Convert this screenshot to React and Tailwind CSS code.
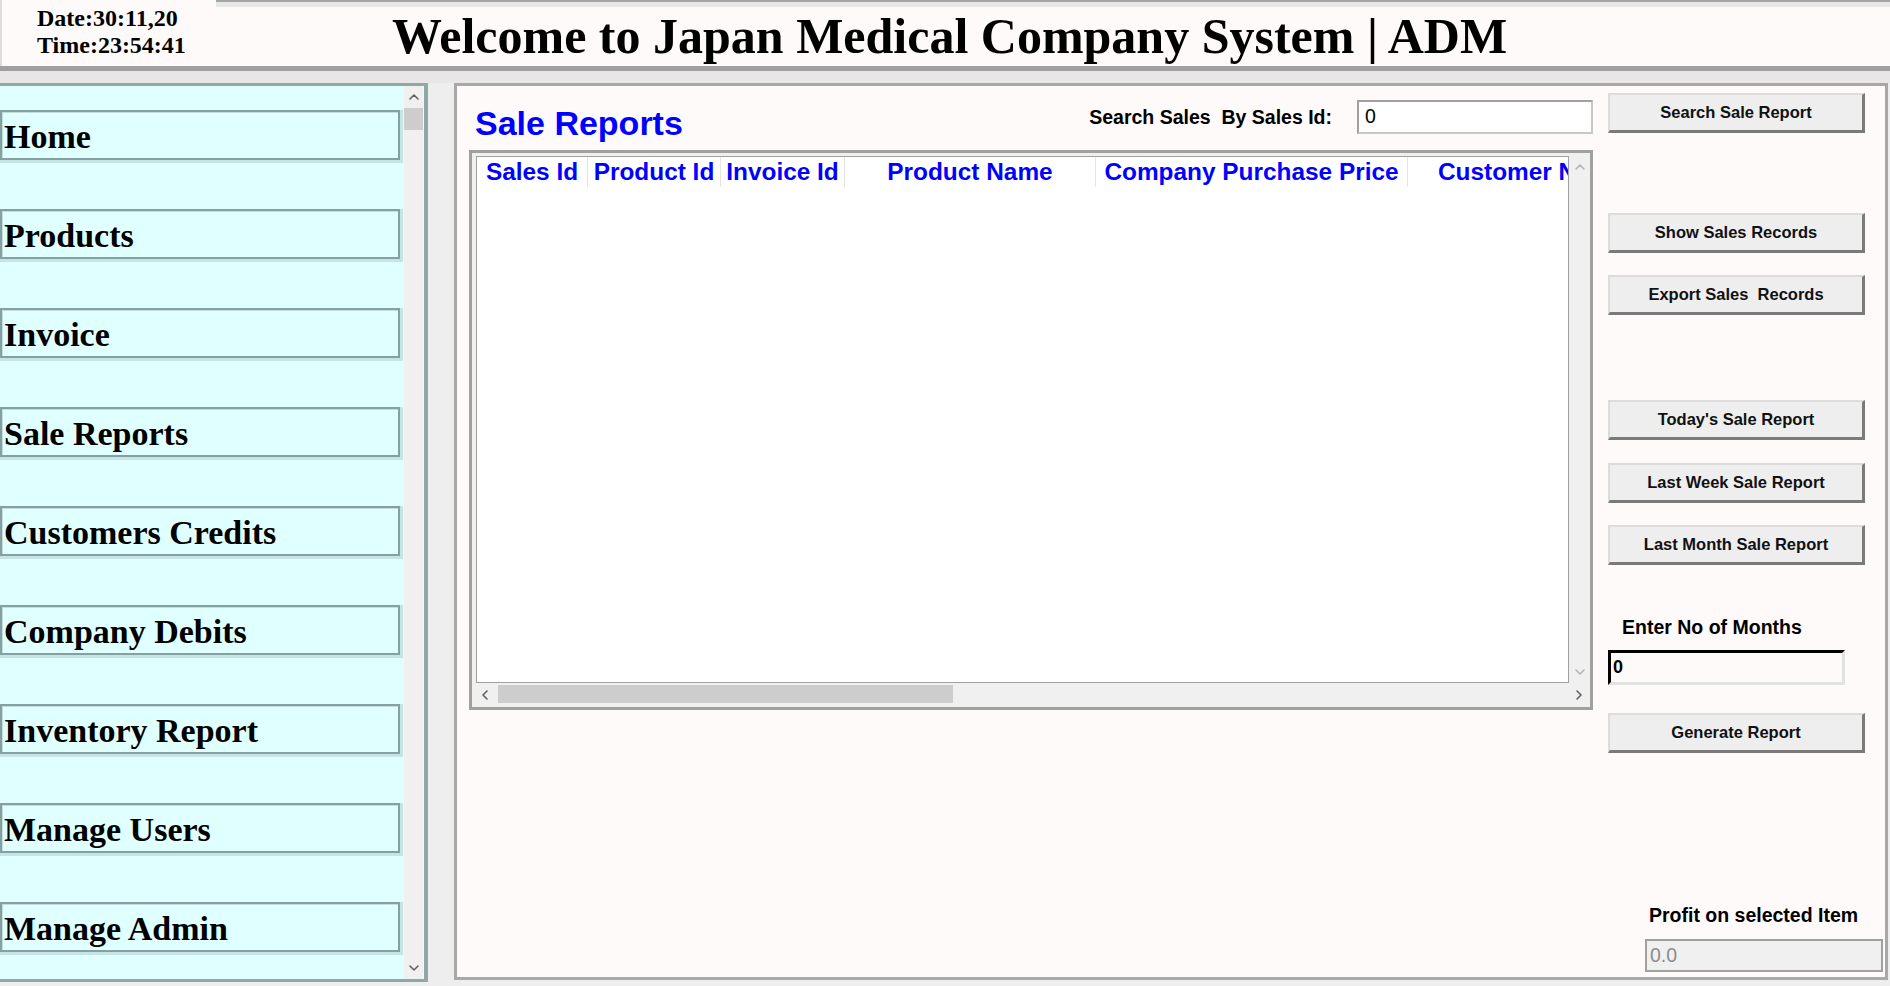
import React from "react";

const serif = "font-['Liberation_Serif',serif]";
const sans = "font-['Liberation_Sans',Arial,sans-serif]";

function Chev({ dir, color = "#606060" }) {
  const pts = {
    up: "1,6 5,2 9,6",
    down: "1,2 5,6 9,2",
    left: "6,1 2,5 6,9",
    right: "3,1 7,5 3,9",
  }[dir];
  return (
    <svg width="10" height="8" viewBox="0 0 10 8" className="block" style={{ overflow: "visible" }}>
      <polyline points={pts} fill="none" stroke={color} strokeWidth="1.6" strokeLinecap="round" strokeLinejoin="round" />
    </svg>
  );
}

const navItems = [
  "Home",
  "Products",
  "Invoice",
  "Sale Reports",
  "Customers Credits",
  "Company Debits",
  "Inventory Report",
  "Manage Users",
  "Manage Admin",
];

const columns = [
  { label: "Sales Id", w: 111 },
  { label: "Product Id", w: 133 },
  { label: "Invoice Id", w: 124 },
  { label: "Product Name", w: 251 },
  { label: "Company Purchase Price", w: 312 },
  { label: "Customer Name", w: 248 },
];

function GrayButton({ children, className = "" }) {
  return (
    <div
      className={`w-[257px] h-[40px] flex items-center justify-center bg-[#eeeeee] border-t-2 border-l-2 border-t-[#dcdcdc] border-l-[#dcdcdc] border-b-[3px] border-r-[3px] border-b-[#7a7a7a] border-r-[#7a7a7a] text-[16.5px] font-bold text-[#111] ${sans} ${className}`}
    >
      <span className="whitespace-pre">{children}</span>
    </div>
  );
}

export default function App() {
  return (
    <div className="w-[1890px] h-[986px] overflow-hidden bg-[#eeeeee] flex flex-col">
      {/* Header */}
      <div className="flex h-[66px]">
        <div className={`w-[216px] h-full bg-[#fffafa] border-l-2 border-[#dcdcdc] pl-[35px] pt-[5px] ${serif} font-bold text-[24px] leading-[26.6px] text-black`}>
          <div>Date:30:11,20</div>
          <div>Time:23:54:41</div>
        </div>
        <div className="flex-1 flex flex-col">
          <div className="h-[2px] bg-[#a4a4a4]" />
          <div className="h-[5px] bg-[#e6e6e6]" />
          <div className={`flex-1 bg-[#fffafa] pl-[176px] pt-[4px] ${serif} font-bold text-[50px] leading-none text-black whitespace-nowrap`}>
            Welcome to Japan Medical Company System | ADM
          </div>
        </div>
      </div>
      <div className="h-[5px] bg-[#a0a0a0]" />
      <div className="h-[12px] bg-[#e8e6e6]" />

      {/* Body */}
      <div className="flex h-[903px] items-start">
        {/* Sidebar */}
        <div className="w-[428px] h-[899px] flex border-t-[3px] border-b-[3px] border-r-[4px] border-[#8ea8a8] bg-[#e0ffff]">
          <div className="flex-1 flex flex-col pt-[24px] gap-[46px]">
            {navItems.map((item) => (
              <div key={item} className="w-[403px] h-[53px] bg-[#c6e4e4]">
                <div
                  className={`w-[400px] h-[50px] bg-[#e0ffff] border-2 border-[#85a0a0] shadow-[inset_1px_1px_0_#c4dede] flex items-center pl-[2px] pt-[3px] ${serif} font-bold text-[34px] leading-none text-black whitespace-nowrap`}
                >
                  {item}
                </div>
              </div>
            ))}
          </div>
          <div className="w-[19px] h-full bg-[#f0f0f0] flex flex-col">
            <div className="h-[22px] flex items-center justify-center">
              <Chev dir="up" />
            </div>
            <div className="h-[22px] bg-[#cdcdcd]" />
            <div className="flex-1" />
            <div className="h-[22px] flex items-center justify-center">
              <Chev dir="down" />
            </div>
          </div>
          <div className="w-[1px] bg-[#e0ffff]" />
        </div>

        {/* Main panel */}
        <div className="ml-[26px] w-[1434px] h-[897px] border-[3px] border-[#a8a8a8] bg-[#fffafa] flex">
          {/* Left column */}
          <div className="pl-[12px] w-[1136px] flex flex-col">
            <div className="h-[64px] flex items-start justify-between">
              <div className={`mt-[20px] ml-[6px] ${sans} font-bold text-[34px] leading-none text-[#0000ff]`}>
                Sale Reports
              </div>
              <div className="flex items-start">
                <div className={`mt-[22px] ${sans} font-bold text-[19.5px] leading-none text-black whitespace-pre`}>
                  Search Sales  By Sales Id:
                </div>
                <div className={`ml-[25px] mt-[14px] w-[236px] h-[34px] bg-white border-2 border-t-[#a0a0a0] border-l-[#a0a0a0] border-r-[#c8c8c8] border-b-[#c8c8c8] flex items-center pl-[6px] ${sans} text-[19.5px] text-black`}>
                  0
                </div>
              </div>
            </div>

            {/* Table */}
            <div className="w-[1124px] h-[560px] border-[3px] border-[#a0a0a0] bg-[#f0f0f0] flex flex-col pt-[3px] pl-[4px]">
              <div className="flex h-[527px]">
                <div className="flex-1 bg-white border border-[#a0a0a0] overflow-hidden">
                  <div className="flex h-[30px] bg-white">
                    {columns.map((c) => (
                      <div
                        key={c.label}
                        className={`shrink-0 h-full flex items-center justify-center border-r border-[#e4e4e4] ${sans} font-bold text-[24.4px] leading-none text-[#0000ff] whitespace-nowrap`}
                        style={{ width: c.w }}
                      >
                        {c.label}
                      </div>
                    ))}
                  </div>
                </div>
                <div className="w-[21px] flex flex-col">
                  <div className="h-[22px] flex items-center justify-center">
                    <Chev dir="up" color="#b4b4b4" />
                  </div>
                  <div className="flex-1" />
                  <div className="h-[22px] flex items-center justify-center">
                    <Chev dir="down" color="#b4b4b4" />
                  </div>
                </div>
              </div>
              <div className="flex h-[22px] items-center">
                <div className="w-[20px] h-full flex items-center justify-center">
                  <Chev dir="left" />
                </div>
                <div className="ml-[2px] w-[455px] h-[18px] bg-[#cdcdcd]" />
                <div className="flex-1" />
                <div className="w-[22px] h-full flex items-center justify-center">
                  <Chev dir="right" />
                </div>
              </div>
            </div>
          </div>

          {/* Right column */}
          <div className="ml-[15px] w-[277px] flex flex-col items-start">
            <GrayButton className="mt-[7px]">Search Sale Report</GrayButton>
            <GrayButton className="mt-[80px]">Show Sales Records</GrayButton>
            <GrayButton className="mt-[22px]">Export Sales  Records</GrayButton>
            <GrayButton className="mt-[85px]">Today's Sale Report</GrayButton>
            <GrayButton className="mt-[23px]">Last Week Sale Report</GrayButton>
            <GrayButton className="mt-[22px]">Last Month Sale Report</GrayButton>
            <div className={`mt-[53px] ml-[14px] ${sans} font-bold text-[19.5px] leading-none text-black`}>
              Enter No of Months
            </div>
            <div className={`mt-[12px] w-[237px] h-[35px] bg-[#fffafa] border-[3px] border-t-black border-l-black border-r-[#e2e2e2] border-b-[#e2e2e2] flex items-center pl-[2px] ${sans} font-bold text-[18px] text-black`}>
              0
            </div>
            <GrayButton className="mt-[28px]">Generate Report</GrayButton>
            <div className={`mt-[153px] ml-[41px] ${sans} font-bold text-[19.5px] leading-none text-black whitespace-nowrap`}>
              Profit on selected Item
            </div>
            <div className={`mt-[14px] ml-[37px] w-[238px] h-[33px] bg-[#f0f0f0] border-2 border-[#a0a0a0] flex items-center pl-[3px] ${sans} text-[19.5px] text-[#8c8c8c]`}>
              0.0
            </div>
          </div>
        </div>
      </div>
    </div>
  );
}
